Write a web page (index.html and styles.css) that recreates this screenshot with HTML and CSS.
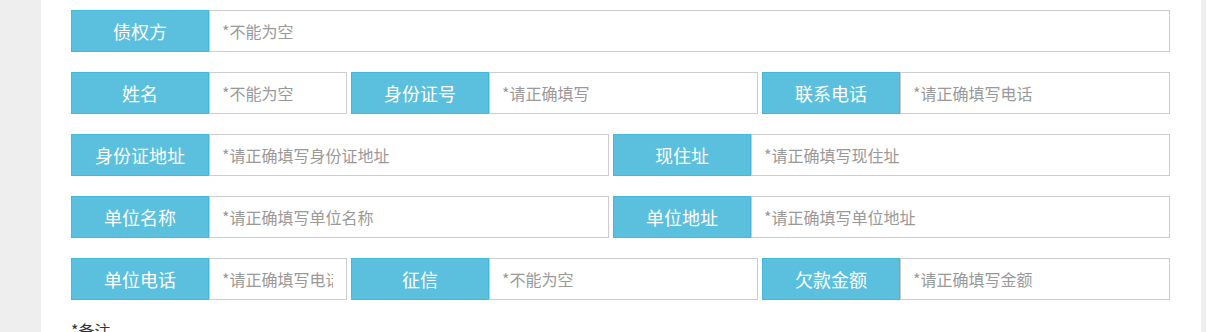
FILE: index.html
```html
<!DOCTYPE html>
<html lang="zh-CN">
<head>
    <meta charset="UTF-8">
    <title>债权信息</title>
    <link rel="stylesheet" href="styles.css">
</head>
<body>
    <div class="panel">
        <div class="row">
            <div class="group">
                <span class="tag">债权方</span>
                <input type="text" placeholder="*不能为空">
            </div>
        </div>
        <div class="row">
            <div class="group g-sm">
                <span class="tag">姓名</span>
                <input type="text" placeholder="*不能为空">
            </div>
            <div class="group g-md">
                <span class="tag">身份证号</span>
                <input type="text" placeholder="*请正确填写">
            </div>
            <div class="group">
                <span class="tag">联系电话</span>
                <input type="text" placeholder="*请正确填写电话">
            </div>
        </div>
        <div class="row">
            <div class="group g-half">
                <span class="tag">身份证地址</span>
                <input type="text" placeholder="*请正确填写身份证地址">
            </div>
            <div class="group">
                <span class="tag">现住址</span>
                <input type="text" placeholder="*请正确填写现住址">
            </div>
        </div>
        <div class="row">
            <div class="group g-half">
                <span class="tag">单位名称</span>
                <input type="text" placeholder="*请正确填写单位名称">
            </div>
            <div class="group">
                <span class="tag">单位地址</span>
                <input type="text" placeholder="*请正确填写单位地址">
            </div>
        </div>
        <div class="row">
            <div class="group g-sm">
                <span class="tag">单位电话</span>
                <input type="text" placeholder="*请正确填写电话">
            </div>
            <div class="group g-md">
                <span class="tag">征信</span>
                <input type="text" placeholder="*不能为空">
            </div>
            <div class="group">
                <span class="tag">欠款金额</span>
                <input type="text" placeholder="*请正确填写金额">
            </div>
        </div>
        <div class="note">*备注</div>
    </div>
</body>
</html>
```

FILE: styles.css
```css
body {
    margin: 0;
    background: #eeeeee;
    font-family: "Noto Sans CJK SC", "Noto Sans", sans-serif;
}
.panel {
    margin-left: 41px;
    width: 1160px;
    min-height: 332px;
    box-sizing: border-box;
    padding: 10px 0 0 30px;
    background: #fff;
}
.row {
    display: flex;
    gap: 4px;
    width: 1099px;
    height: 42px;
    margin-bottom: 20px;
}
.group {
    display: flex;
    flex: 1;
    min-width: 0;
}
.g-sm {
    flex: 0 0 276px;
}
.g-md {
    flex: 0 0 407px;
}
.g-half {
    flex: 0 0 538px;
}
.tag {
    flex: 0 0 138px;
    box-sizing: border-box;
    display: flex;
    align-items: center;
    justify-content: center;
    background: #5bc0de;
    border: 1px solid #46b8da;
    color: #fff;
    font-size: 18px;
}
.group input {
    flex: 1;
    min-width: 0;
    box-sizing: border-box;
    height: 42px;
    margin: 0;
    padding: 0 13px 0 12px;
    border: 1px solid #ccc;
    border-radius: 0;
    font-family: inherit;
    font-size: 16px;
    color: #555;
    outline: none;
}
.group input::placeholder {
    color: #999;
}
.note {
    font-size: 16px;
    color: #333;
    line-height: 20px;
}
```
